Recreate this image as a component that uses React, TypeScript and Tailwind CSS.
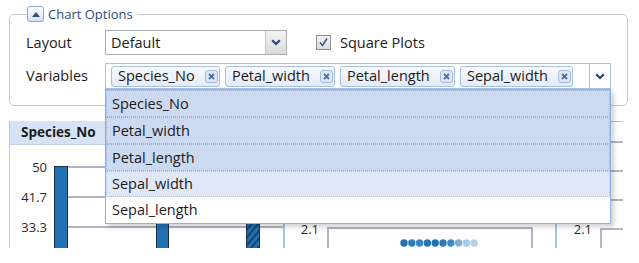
import React from "react";

const tags = [
  { name: "Species_No", w: "w-[109px]" },
  { name: "Petal_width", w: "w-[110px]" },
  { name: "Petal_length", w: "w-[115px]" },
  { name: "Sepal_width", w: "w-[113px]" },
];

const items = [
  { name: "Species_No", cls: "h-[27px] bg-[#cbd9f1] border-[#93afe0]" },
  { name: "Petal_width", cls: "h-[27px] bg-[#cbd9f1] border-[#93afe0]" },
  { name: "Petal_length", cls: "h-[27px] bg-[#cbd9f1] border-[#93afe0]" },
  { name: "Sepal_width", cls: "h-[26px] bg-[#e0e8f7] border-[#a9c0e8]" },
  { name: "Sepal_length", cls: "h-[26px] bg-white border-transparent" },
];

function Chevron() {
  return (
    <svg width="10" height="7" viewBox="0 0 10 7">
      <path d="M1.2 1.2 L5 5 L8.8 1.2" fill="none" stroke="#29457a" strokeWidth="2.2" />
    </svg>
  );
}

function RemoveIcon() {
  return (
    <span className="flex h-[13px] w-[13px] items-center justify-center rounded-[3px] border border-[#a4bbde] bg-[#dfe7f4]">
      <svg width="7" height="7" viewBox="0 0 7 7">
        <path d="M1 1 L6 6 M6 1 L1 6" stroke="#4d6ea6" strokeWidth="1.8" />
      </svg>
    </span>
  );
}

function SpeciesChart() {
  return (
    <svg width="274" height="103" className="block">
      <defs>
        <pattern id="stripe" width="5" height="5" patternUnits="userSpaceOnUse" patternTransform="rotate(40)">
          <rect width="5" height="5" fill="#2271b3" />
          <rect width="1.6" height="5" fill="#123a5e" />
        </pattern>
      </defs>
      {[22, 52, 82].map((y) => (
        <line key={y} x1="44" x2="274" y1={y} y2={y} stroke="#b3b4c4" strokeWidth="2" />
      ))}
      <g fontFamily="Open Sans" fontSize="13" fill="#2b2b2b" textAnchor="end">
        <text x="37" y="27">50</text>
        <text x="37" y="57">41.7</text>
        <text x="37" y="87">33.3</text>
      </g>
      <rect x="44.5" y="21.5" width="13" height="90" fill="#2271b3" stroke="#1c2f45" />
      <rect x="146.5" y="60.5" width="12" height="50" fill="#2271b3" stroke="#1c2f45" />
      <rect x="236.5" y="70.5" width="13" height="40" fill="url(#stripe)" stroke="#1c2f45" />
    </svg>
  );
}

function ScatterChart() {
  const dots = ["#1f72b2", "#2e7cba", "#3a86c0", "#2475b5", "#1f72b2", "#2a79b7", "#3d89c2", "#7fb0d8", "#a9cbe6", "#b3d1ea"];
  return (
    <svg width="270" height="127" className="block">
      <text x="34" y="113" fontFamily="Open Sans" fontSize="13" fill="#2b2b2b" textAnchor="end">2.1</text>
      <path d="M43 127 V107 H247 V127" fill="none" stroke="#b3b4c4" strokeWidth="2" />
      {dots.map((c, i) => (
        <circle key={i} cx={119 + i * 7.8} cy="122" r="3.7" fill={c} />
      ))}
    </svg>
  );
}

function EdgeChart() {
  return (
    <svg width="66" height="127" className="block">
      <line x1="0" x2="66" y1="0.5" y2="0.5" stroke="#a9c6ec" strokeWidth="1" />
      {[21, 50, 79].map((y) => (
        <line key={y} x1="44" x2="66" y1={y} y2={y} stroke="#b3b4c4" strokeWidth="2" />
      ))}
      <text x="35" y="113" fontFamily="Open Sans" fontSize="13" fill="#2b2b2b" textAnchor="end">2.1</text>
      <path d="M44 127 V108 H66" fill="none" stroke="#b3b4c4" strokeWidth="2" />
    </svg>
  );
}

export default function App() {
  return (
    <div className="relative h-[263px] w-[639px] overflow-hidden bg-white font-['Open_Sans',sans-serif] text-[#1b1b1b]">
      {/* Chart options */}
      <fieldset className="ml-[9px] mt-[5px] w-[614px] rounded-[5px] border border-[#c7c7c7] px-[16px] pb-[16px]">
        <legend className="px-[1px]">
          <span className="flex items-center gap-[4px] pr-[3px]">
            <span className="flex h-[16px] w-[17px] items-center justify-center rounded-[3px] border border-[#86a9d6] bg-gradient-to-b from-white to-[#d7e4f5]">
              <svg width="8" height="5" viewBox="0 0 8 5">
                <path d="M0 5 L4 0 L8 5 Z" fill="#2d4c88" />
              </svg>
            </span>
            <span className="text-[13px] leading-[18px] text-[#2d4a7a]">Chart Options</span>
          </span>
        </legend>

        <div className="mt-[7px] flex h-[25px] items-center text-[14.5px]">
          <span className="w-[79px]">Layout</span>
          <div className="flex h-[25px] w-[182px] items-stretch border border-[#abadb3] bg-white">
            <span className="flex flex-1 items-center pl-[5px]">Default</span>
            <span className="flex w-[21px] items-center justify-center border-l border-[#c3c3c3] bg-gradient-to-b from-[#f4f4f4] to-[#dadada]">
              <Chevron />
            </span>
          </div>
          <span className="ml-[29px] flex h-[15px] w-[15px] items-center justify-center border border-[#8e8f8f] bg-gradient-to-b from-[#f2f2f2] to-[#dcdcdc]">
            <svg width="11" height="11" viewBox="0 0 11 11">
              <path d="M2 5.5 L4.5 8.5 L9 1.5" fill="none" stroke="#3a5a9e" strokeWidth="1.6" />
            </svg>
          </span>
          <span className="ml-[9px]">Square Plots</span>
        </div>

        <div className="mt-[8px] flex h-[26px] items-center text-[14.5px]">
          <span className="w-[79px]">Variables</span>
          <div className="flex h-[26px] w-[506px] items-stretch border border-[#a6c2ea] bg-white">
            <div className="flex flex-1 items-center gap-[5px] pl-[5px]">
              {tags.map((t) => (
                <span
                  key={t.name}
                  className={`flex h-[21px] ${t.w} items-center justify-between rounded-[3px] border border-[#a7c0e3] bg-gradient-to-b from-[#f7f9fd] to-[#e4ecf8] pl-[6px] pr-[1px]`}
                >
                  {t.name}
                  <RemoveIcon />
                </span>
              ))}
            </div>
            <span className="flex w-[21px] items-center justify-center border-l border-[#a6c2ea] bg-white">
              <Chevron />
            </span>
          </div>
        </div>
      </fieldset>

      {/* Plot matrix behind */}
      <div className="ml-[9px] mt-[15px] flex h-[127px] w-[614px]">
        <div className="flex w-[274px] flex-col border-l border-[#b4cbe9]">
          <div className="flex h-[24px] items-center border-b border-[#bcd0ec] bg-[#d5e3f5] pl-[11px] text-[13.5px] font-bold">
            Species_No
          </div>
          <SpeciesChart />
        </div>
        <div className="w-[272px] border-l-2 border-[#a7c5ec]">
          <ScatterChart />
        </div>
        <div className="w-[68px] border-l-2 border-[#a7c5ec]">
          <EdgeChart />
        </div>
      </div>

      {/* Open dropdown list */}
      <div className="absolute left-[105px] top-[89px] w-[506px] border border-[#8fb2e6] bg-white shadow-[3px_3px_5px_rgba(0,0,0,0.18)]">
        {items.map((it) => (
          <div
            key={it.name}
            className={`flex items-center border border-dotted pl-[5px] text-[14.5px] ${it.cls}`}
          >
            {it.name}
          </div>
        ))}
      </div>
    </div>
  );
}
